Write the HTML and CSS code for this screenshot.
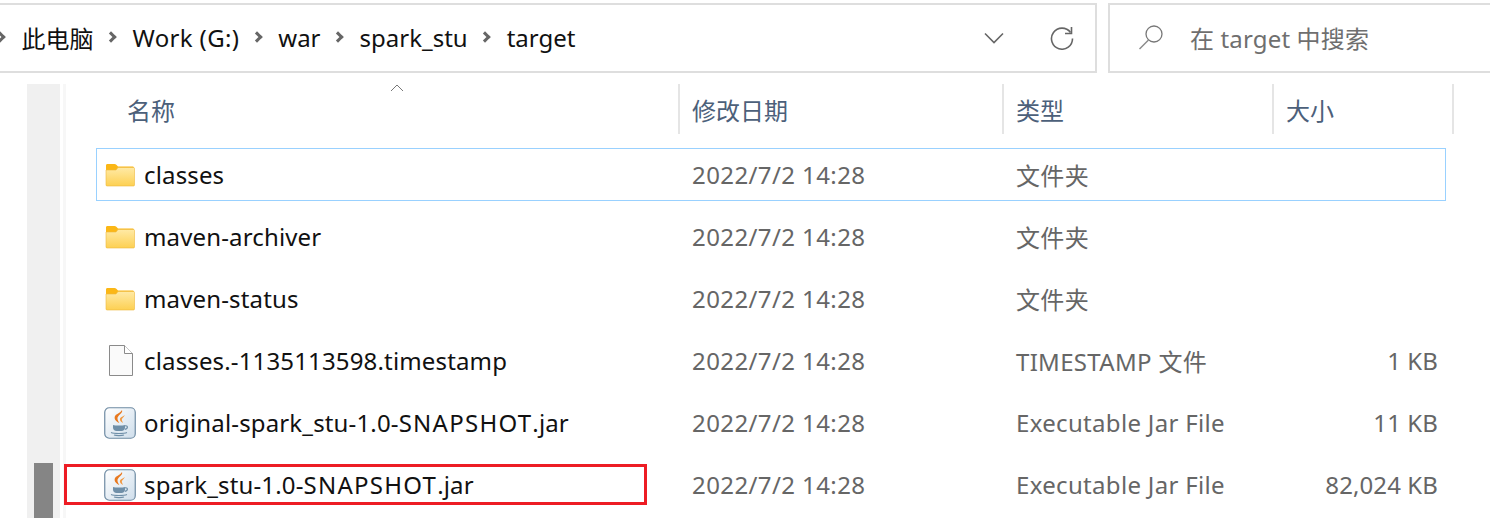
FILE: index.html
```html
<!DOCTYPE html>
<html lang="zh-CN">
<head>
  <meta charset="UTF-8">
  <title>target</title>
  <link rel="stylesheet" href="styles.css">
</head>
<body>
  <svg class="defs" width="0" height="0">
    <defs>
      <linearGradient id="folderFill" x1="0" y1="0" x2="0" y2="1">
        <stop offset="0" stop-color="#ffeaa6"/>
        <stop offset="1" stop-color="#fdd052"/>
      </linearGradient>
      <linearGradient id="jarFill" x1="0" y1="0" x2="1" y2="1">
        <stop offset="0" stop-color="#ffffff"/>
        <stop offset="1" stop-color="#cfdeeb"/>
      </linearGradient>
      <symbol id="folder" viewBox="0 0 30 24">
        <path d="M1 2.500c0-1 .6-1.500 1.500-1.500h7c.8 0 1.300.3 1.800.8l1.700 1.700h14.500c1 0 1.500.5 1.500 1.500v2H1z" fill="#fbb716"/>
        <path d="M1 7h10l2-2.500h15.500c.6 0 1 .4 1 1V22c0 .6-.4 1-1 1H2c-.6 0-1-.4-1-1z" fill="url(#folderFill)" stroke="#eeb83c" stroke-width=".6"/>
      </symbol>
      <symbol id="file" viewBox="0 0 24 31">
        <path d="M.5.500h15l8 8v22H.5z" fill="#fafafa" stroke="#8a8a8a"/>
        <path d="M15.500.500v8h8" fill="#fff" stroke="#8a8a8a"/>
      </symbol>
      <symbol id="jar" viewBox="0 0 32 32">
        <rect x=".75" y=".75" width="30.500" height="30.500" rx="4.500" fill="url(#jarFill)" stroke="#6e8ba3" stroke-width="1.200"/>
        <path d="M18 3c1.500 3.500-5 5-4.500 9 .2 1.500 1 2.500 1.800 4-3.200-1.500-5.300-3.500-4.500-6.500C11.500 7 16.500 6 18 3z" fill="#e8781e"/>
        <path d="M20.500 8c.3 2-3.300 3-2.500 5.500.3 1 .7 1.500 1 2.500-2.300-1-3.500-2.800-3-4.500.5-1.700 3.500-2 4.500-3.500z" fill="#f09a45"/>
        <path d="M9 18c2 .7 10 .7 12 0v2.500c0 2-1.500 3.500-3.500 3.500h-5C10.500 24 9 22.500 9 20.500z" fill="#6f8fa8"/>
        <path d="M21 18.800c2.800-.5 3.500 2.500 0 3.500" fill="none" stroke="#6f8fa8" stroke-width="1.200"/>
        <path d="M7 25.500c3 1.300 13 1.300 16 0M10 28c2 .7 8 .7 10 0" fill="none" stroke="#6f8fa8" stroke-width="1.200"/>
      </symbol>
    </defs>
  </svg>

  <div class="toolbar">
    <div class="address">
      <div class="crumbs">
        <span class="sep cut"></span>
        <span>此电脑</span>
        <span class="sep"></span>
        <span class="wide">Work (G:)</span>
        <span class="sep"></span>
        <span>war</span>
        <span class="sep"></span>
        <span>spark_stu</span>
        <span class="sep"></span>
        <span>target</span>
      </div>
      <svg class="chevron" width="20" height="12" viewBox="0 0 20 12"><path d="M1 1.500l9 9 9-9" fill="none" stroke="#666" stroke-width="1.600"/></svg>
      <svg class="refresh" width="24" height="24" viewBox="0 0 24 24"><path d="M20.500 6.500A10.500 10.500 0 1 0 22.500 12.500" fill="none" stroke="#666" stroke-width="1.600"/><path d="M21.500 1v6.500H15" fill="none" stroke="#666" stroke-width="1.600"/></svg>
    </div>
    <div class="search">
      <svg width="26" height="26" viewBox="0 0 26 26"><circle cx="16" cy="10" r="8" fill="none" stroke="#777" stroke-width="1.300"/><path d="M10.500 16L1.500 25" fill="none" stroke="#8a8a8a" stroke-width="1.500"/></svg>
      <span>在 target 中搜索</span>
    </div>
  </div>

  <div class="main">
    <div class="scrollbar"><div class="thumb"></div></div>
    <div class="pane">
      <div class="head">
        <div class="col">名称<svg class="caret" width="14" height="8" viewBox="0 0 14 8"><path d="M1 7l6-6 6 6" fill="none" stroke="#777"/></svg></div>
        <div class="col">修改日期</div>
        <div class="col">类型</div>
        <div class="col">大小</div>
      </div>
      <div class="row selected">
        <div class="name"><svg class="ico" width="32" height="24"><use href="#folder" x="1" width="30" height="24"/></svg>classes</div>
        <div class="cell date">2022/7/2 14:28</div>
        <div class="cell type">文件夹</div>
        <div class="cell size"></div>
      </div>
      <div class="row">
        <div class="name"><svg class="ico" width="32" height="24"><use href="#folder" x="1" width="30" height="24"/></svg>maven-archiver</div>
        <div class="cell date">2022/7/2 14:28</div>
        <div class="cell type">文件夹</div>
        <div class="cell size"></div>
      </div>
      <div class="row">
        <div class="name"><svg class="ico" width="32" height="24"><use href="#folder" x="1" width="30" height="24"/></svg>maven-status</div>
        <div class="cell date">2022/7/2 14:28</div>
        <div class="cell type">文件夹</div>
        <div class="cell size"></div>
      </div>
      <div class="row">
        <div class="name"><svg class="ico" width="32" height="31"><use href="#file" x="5" width="24" height="31"/></svg>classes.-1135113598.timestamp</div>
        <div class="cell date">2022/7/2 14:28</div>
        <div class="cell type">TIMESTAMP 文件</div>
        <div class="cell size">1 KB</div>
      </div>
      <div class="row">
        <div class="name"><svg class="ico" width="32" height="32"><use href="#jar"/></svg><span>original-spark_stu-1.0-<span class="caps">SNAPSHOT</span>.jar</span></div>
        <div class="cell date">2022/7/2 14:28</div>
        <div class="cell type">Executable Jar File</div>
        <div class="cell size">11 KB</div>
      </div>
      <div class="row">
        <div class="name"><svg class="ico" width="32" height="32"><use href="#jar"/></svg><span>spark_stu-1.0-<span class="caps">SNAPSHOT</span>.jar</span></div>
        <div class="cell date">2022/7/2 14:28</div>
        <div class="cell type">Executable Jar File</div>
        <div class="cell size">82,024 KB</div>
        <div class="redbox"></div>
      </div>
    </div>
  </div>
</body>
</html>
```

FILE: styles.css
```css
* {
  box-sizing: border-box;
}
html, body {
  height: 518px;
  overflow: hidden;
}
body {
  margin: 0;
  background: #fff;
  color: #111;
  font-family: "Noto Sans", "Noto Sans CJK SC", sans-serif;
  font-size: 24px;
}
.defs {
  position: absolute;
}

.toolbar {
  display: flex;
  gap: 11px;
  height: 73px;
  padding-top: 3px;
}
.address {
  display: flex;
  align-items: center;
  width: 1097px;
  border: 2px solid #dedede;
  border-left: none;
  padding-right: 21px;
}
.crumbs {
  display: flex;
  align-items: center;
  flex: 1;
  gap: 13.5px;
  margin-left: -4px;
  padding-bottom: 2px;
}
.wide {
  letter-spacing: .35px;
}
.sep {
  width: 8px;
  height: 8px;
  margin: 0 4px 0 0;
  border-top: 3px solid #666;
  border-right: 3px solid #666;
  transform: rotate(45deg);
}
.chevron {
  margin-right: 46px;
}
.search {
  display: flex;
  align-items: center;
  flex: 1;
  gap: 26px;
  padding: 0 0 2px 28px;
  border: 2px solid #dedede;
  border-right: none;
  color: #6f6f6f;
  letter-spacing: .15px;
}

.main {
  display: flex;
  height: 445px;
  padding: 11px 0 0 27px;
}
.scrollbar {
  display: flex;
  align-items: flex-end;
  width: 33px;
  padding-left: 7px;
  background: #f0f0f0;
  margin-bottom: -11px;
}
.thumb {
  width: 19px;
  height: 66px;
  background: #858585;
}
.pane {
  flex: 1;
  margin-left: 3px;
  padding-left: 30px;
  border-left: 3px solid #f7f7f7;
}

.head, .row {
  display: grid;
  width: 1350px;
  grid-template-columns: 584px 324px 270px 172px;
}
.head {
  height: 53px;
  margin-bottom: 11px;
  color: #4c607a;
}
.col {
  position: relative;
  display: flex;
  align-items: center;
  height: 50px;
  padding-left: 12px;
  border-right: 2px solid #e5e5e5;
}
.col:first-child {
  padding-left: 31px;
}
.caret {
  position: absolute;
  left: 294px;
  top: 0;
}
.head .col:last-child {
  width: 180px;
}

.row {
  position: relative;
  align-items: center;
  height: 53px;
  margin-bottom: 9px;
  border: 1px solid transparent;
}
.row.selected {
  border-color: #99d1ff;
}
.name {
  display: flex;
  align-items: center;
  padding-left: 7px;
  letter-spacing: .15px;
}
.caps {
  letter-spacing: 1.25px;
}
.ico {
  flex: none;
  margin-right: 8px;
}
.cell {
  padding-left: 11px;
  color: #666;
}
.date {
  letter-spacing: .4px;
}
.type {
  letter-spacing: .32px;
}
.cell.size {
  padding: 0 9px 0 0;
  text-align: right;
  letter-spacing: .1px;
}
.redbox {
  position: absolute;
  left: -33px;
  top: 5px;
  width: 583px;
  height: 41px;
  border: 3px solid #ed1c24;
}
```
